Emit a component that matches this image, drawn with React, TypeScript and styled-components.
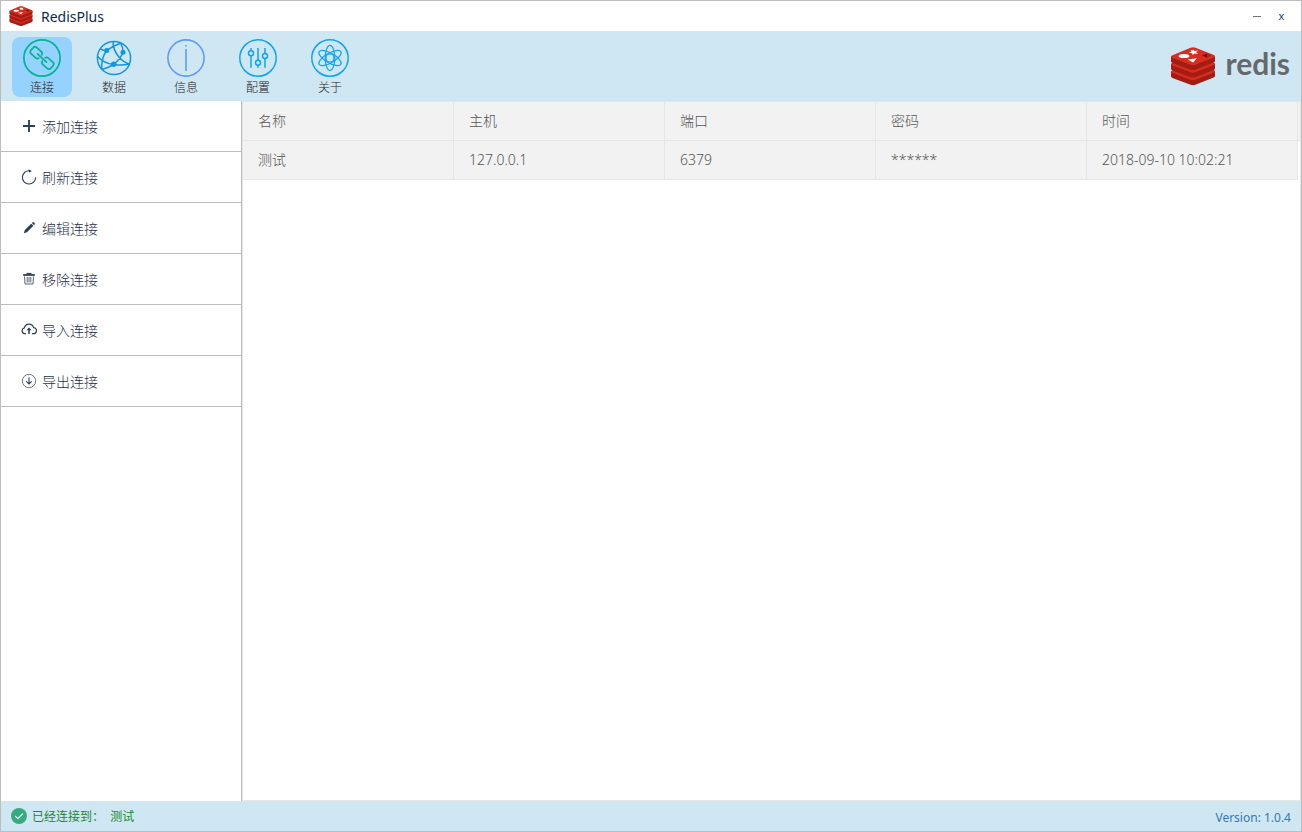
import React from "react";
import styled, { createGlobalStyle } from "styled-components";

const GlobalStyle = createGlobalStyle`
  *, *::before, *::after { box-sizing: border-box; }
  body {
    margin: 0;
    background: #fff;
    font-family: "Noto Sans", "Noto Sans CJK SC", sans-serif;
    font-size: 14px;
  }
  button { font: inherit; color: inherit; border: 0; background: none; padding: 0; cursor: pointer; }
  svg { flex-shrink: 0; }
`;

const Window = styled.div`
  display: flex;
  flex-direction: column;
  min-height: 100vh;
  border: 1px solid #bdbdbd;
`;

const TitleBar = styled.header`
  display: flex;
  align-items: center;
  height: 30px;
  padding: 0 11px 0 8px;
`;

const AppName = styled.h1`
  flex: 1;
  margin: 0 0 0 8px;
  font-size: 14px;
  font-weight: 400;
  color: #0c2c52;
`;

const WindowButton = styled.button`
  width: 17px;
  height: 20px;
  margin-left: 8px;
  font-size: 11px;
  line-height: 20px;
  color: #1d3a66;
`;

const Minus = styled.span`
  display: block;
  width: 8px;
  height: 1px;
  margin: 0 auto;
  background: #7d6f78;
`;

const Toolbar = styled.nav`
  display: flex;
  align-items: flex-start;
  gap: 12px;
  height: 70px;
  padding: 6px 11px 4px;
  background: #cfe7f3;
`;

const Tool = styled.button<{ $active?: boolean }>`
  display: flex;
  flex-direction: column;
  align-items: center;
  justify-content: flex-start;
  width: 60px;
  height: 60px;
  padding-top: 2px;
  border-radius: 8px;
  background: ${(p) => (p.$active ? "#95d2ff" : "transparent")};
`;

const ToolLabel = styled.span`
  padding-top: 2px;
  font-size: 12px;
  font-weight: 300;
  line-height: 18px;
  color: #222;
`;

const Brand = styled.div`
  display: flex;
  align-items: center;
  gap: 10px;
  height: 58px;
  margin-left: auto;
`;

const BrandName = styled.span`
  font-family: Lato, sans-serif;
  font-size: 30px;
  font-weight: 700;
  line-height: 38px;
  padding-bottom: 7px;
  color: #66696b;
`;

const Body = styled.div`
  display: flex;
  flex: 1;
`;

const Sidebar = styled.aside`
  width: 241px;
  border-right: 1px solid #bdbdbd;
`;

const Action = styled.button`
  display: flex;
  align-items: center;
  gap: 5px;
  width: 100%;
  height: 51px;
  padding-left: 20px;
  border-bottom: 1px solid #bdbdbd;
  font-weight: 300;
  color: #1f3048;
`;

const Content = styled.main`
  flex: 1;
  border: 1px solid #e6e6e6;
`;

const Table = styled.table`
  width: 100%;
  table-layout: fixed;
  border-collapse: separate;
  border-spacing: 0;
  color: #555;
`;

const cell = `
  height: 39px;
  padding: 0 15px;
  border: 0 solid #e6e6e6;
  border-width: 0 1px 1px 0;
  background: #f2f2f2;
  font-weight: 300;
  line-height: 20px;
  text-align: left;
`;

const HeadCell = styled.th`${cell}`;
const DataCell = styled.td`${cell}`;

const ScrollGutter = styled.th`
  width: 2px;
  padding: 0;
  border-bottom: 1px solid #e6e6e6;
  background: #f2f2f2;
`;

const StatusBar = styled.footer`
  display: flex;
  align-items: center;
  justify-content: space-between;
  height: 30px;
  padding: 0 10px;
  background: #cfe7f3;
  font-size: 12px;
`;

const Status = styled.span`
  display: flex;
  align-items: center;
  gap: 5px;
  white-space: pre;
  color: #1c8a2c;
`;

const Version = styled.span`
  padding-top: 2px;
  color: #3579ae;
`;

const RedisMark = ({ width, height }: { width: number; height: number }) => (
  <svg width={width} height={height} viewBox="0 0 44 38" aria-hidden="true">
    {[15, 7.5, 0].map((y) => (
      <g key={y} transform={`translate(0 ${y})`}>
        <path d="M0 9.5V14.5Q0 15.3 2 16.2L19 22.6Q22 23.6 25 22.6L42 15.8Q44 15 44 14V9.5Z" fill="#a31d14" />
        <path d="M1 8.5 19.5.7Q22-.2 24.5.7L43 8Q45 9.4 43 10.4L25 17.6Q22 18.7 19 17.6L1 10.8Q-1 9.6 1 8.5Z" fill="#d82c20" />
      </g>
    ))}
    <ellipse cx="13" cy="9" rx="5.4" ry="2.1" fill="#fff" />
    <path d="m22.3 2.2 1.2 1.7 3.6-.5-2 1.8 2 1.7-3.5-.4-1.8 1.4-.7-1.7-3.3-.4 2.7-1-.9-1.8 2.6.6z" fill="#fff" />
    <path d="m16.7 12.6 9-1.4-3.5 4.4z" fill="#fff" />
    <path d="m31 8.6 5-2.2v4.3z" fill="#7a0c00" />
    <path d="m36 6.4 4 1.8-4 2.5z" fill="#ad2115" />
  </svg>
);

const icons: Record<string, React.ReactNode> = {
  link: (
    <g stroke="#00b58f" strokeWidth="1.7">
      <circle cx="19" cy="19" r="18.1" />
      <g transform="rotate(42 19 19)" strokeLinecap="round">
        <path d="M16.6 21.2a2.3 2.3 0 0 1-2.3 2H7.9a2.3 2.3 0 0 1-2.3-2.3v-3.8a2.3 2.3 0 0 1 2.3-2.3h6.4a2.3 2.3 0 0 1 2.3 2" />
        <path d="M21.4 16.8a2.3 2.3 0 0 1 2.3-2h6.4a2.3 2.3 0 0 1 2.3 2.3v3.8a2.3 2.3 0 0 1-2.3 2.3h-6.4a2.3 2.3 0 0 1-2.3-2" />
        <path d="M13 19h12" />
      </g>
    </g>
  ),
  data: (
    <g stroke="#1296db" strokeWidth="1.5">
      <circle cx="19" cy="19" r="16.6" />
      <path d="M5.2 9.7Q8.5 12 11.7 11.3Q17 7.5 25.4 4.2M18.2 2.7Q17.5 10 24 18Q28 23 34.6 25.2M11.7 11.3Q6.2 19 6.6 30.5M2.5 17.5Q9 24.5 18.7 25.5Q27 27 35 24.8M28 13.3Q25.5 20 18.7 25.5Q13 29 6.8 30.5M28 13.3Q28.3 8.5 25.6 4.2" />
      <g fill="#1296db" stroke="none">
        <circle cx="11.7" cy="11.4" r="2.5" />
        <circle cx="28" cy="13.3" r="2.5" />
        <circle cx="18.7" cy="25.3" r="2.7" />
      </g>
    </g>
  ),
  info: (
    <g stroke="#6199fa" strokeWidth="1.6">
      <circle cx="19" cy="19" r="18.1" />
      <path d="M19 6v1.6M19 10v22" />
    </g>
  ),
  config: (
    <g stroke="#0ea5f0" strokeWidth="1.5">
      <circle cx="19" cy="19" r="18.2" />
      <path d="M12 9v2.8M12 16.8v12M19 9v12.2M19 26.2v2.6M26 9v5.5M26 19.5v9.3" />
      <circle cx="12" cy="14.3" r="2.5" />
      <circle cx="19" cy="23.7" r="2.5" />
      <circle cx="26" cy="17" r="2.5" />
    </g>
  ),
  about: (
    <g stroke="#0ea5f0" strokeWidth="1.2">
      <circle cx="19" cy="19" r="18.2" strokeWidth="1.5" />
      <circle cx="19" cy="19" r="4" />
      {[0, 60, 120].map((a) => (
        <ellipse key={a} cx="19" cy="19" rx="4.8" ry="12.6" transform={`rotate(${a} 19 19)`} />
      ))}
    </g>
  ),
  add: <path d="M8 2v12M2 8h12" stroke="#2f4056" strokeWidth="1.9" />,
  refresh: (
    <g stroke="#2f4056" strokeWidth="1.1">
      <path d="M14.6 8.2A6.6 6.6 0 1 1 8.8 1.8" />
      <path d="M7.6.2 10.8 1.9 8 3.8z" fill="#2f4056" stroke="none" />
    </g>
  ),
  edit: <path d="M2.8 13.2 3.8 10 10.2 3.7 12.4 5.8 6 12.2zM10.8 3.1l.7-.7a1.2 1.2 0 0 1 1.6 0l.5.6a1.2 1.2 0 0 1 0 1.6l-.6.6z" fill="#2f4056" />,
  remove: (
    <g stroke="#2f4056">
      <path d="M2.2 4h11.6" strokeWidth="1.8" />
      <path d="M5.5 2.5h5" strokeWidth="1.2" />
      <path d="M3.5 5.5 4 13h8l.5-7.5M6.2 6v5.5M8 6v5.5M9.8 6v5.5" strokeWidth=".8" />
    </g>
  ),
  upload: (
    <g stroke="#2f4056" strokeWidth="1.2">
      <path d="M5 11.6H3.6A2.9 2.9 0 0 1 3.3 5.9 4.8 4.8 0 0 1 12.6 5.6 3 3 0 0 1 12.4 11.6H11" />
      <path d="M8 12V6.5" strokeWidth="1.5" />
      <path d="M5.5 8.2 8 5.4l2.5 2.8z" fill="#2f4056" stroke="none" />
    </g>
  ),
  download: (
    <g stroke="#2f4056">
      <circle cx="8" cy="8" r="6.7" strokeWidth=".7" />
      <path d="M8 4.5v6.3M5.3 8.3 8 11l2.7-2.7" strokeWidth="1.1" />
    </g>
  ),
};

const Icon = ({ name, size }: { name: string; size: number }) => (
  <svg width={size} height={size} viewBox={`0 0 ${size} ${size}`} fill="none" aria-hidden="true">
    {icons[name]}
  </svg>
);

const tools = [
  ["link", "连接"],
  ["data", "数据"],
  ["info", "信息"],
  ["config", "配置"],
  ["about", "关于"],
];

const actions = [
  ["add", "添加连接"],
  ["refresh", "刷新连接"],
  ["edit", "编辑连接"],
  ["remove", "移除连接"],
  ["upload", "导入连接"],
  ["download", "导出连接"],
];

const columns = ["名称", "主机", "端口", "密码", "时间"];
const rows = [["测试", "127.0.0.1", "6379", "******", "2018-09-10 10:02:21"]];

export default function App() {
  return (
    <>
      <GlobalStyle />
      <Window>
        <TitleBar>
          <RedisMark width={24} height={20} />
          <AppName>RedisPlus</AppName>
          <WindowButton aria-label="最小化"><Minus /></WindowButton>
          <WindowButton aria-label="关闭">x</WindowButton>
        </TitleBar>
        <Toolbar>
          {tools.map(([icon, label], i) => (
            <Tool key={icon} $active={i === 0}>
              <Icon name={icon} size={38} />
              <ToolLabel>{label}</ToolLabel>
            </Tool>
          ))}
          <Brand>
            <RedisMark width={44} height={38} />
            <BrandName>redis</BrandName>
          </Brand>
        </Toolbar>
        <Body>
          <Sidebar>
            {actions.map(([icon, label]) => (
              <Action key={icon}>
                <Icon name={icon} size={16} />
                {label}
              </Action>
            ))}
          </Sidebar>
          <Content>
            <Table>
              <thead>
                <tr>
                  {columns.map((c) => <HeadCell key={c} scope="col">{c}</HeadCell>)}
                  <ScrollGutter aria-hidden="true" />
                </tr>
              </thead>
              <tbody>
                {rows.map((row) => (
                  <tr key={row[1]}>
                    {row.map((value, i) => <DataCell key={columns[i]}>{value}</DataCell>)}
                  </tr>
                ))}
              </tbody>
            </Table>
          </Content>
        </Body>
        <StatusBar>
          <Status>
            <svg width="16" height="16" viewBox="0 0 16 16" fill="none" aria-hidden="true">
              <circle cx="8" cy="8" r="8" fill="#36ab80" />
              <path d="m4.2 8 2.7 2.6 5-5" stroke="#fff" strokeWidth="1.1" />
            </svg>
            {"已经连接到：  测试"}
          </Status>
          <Version>Version: 1.0.4</Version>
        </StatusBar>
      </Window>
    </>
  );
}
